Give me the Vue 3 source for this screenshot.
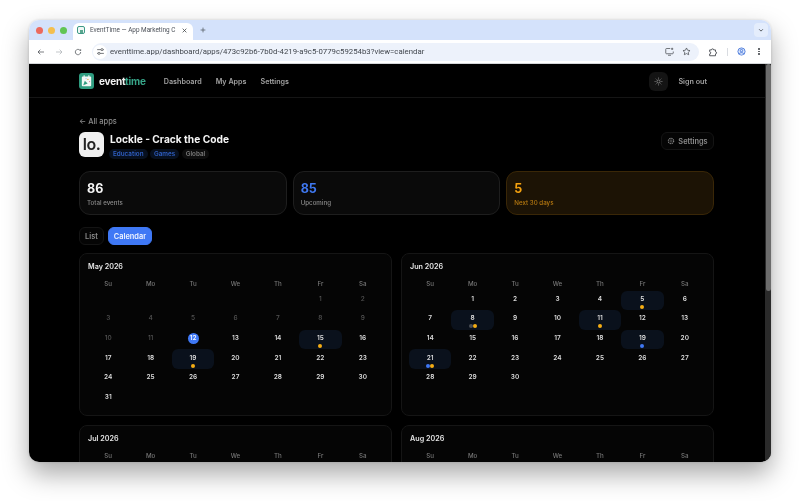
<script setup>
const lead = { May: 5, Jun: 1, Jul: 3, Aug: 6 }

function buildDays(total, offset, dim, marks) {
  const cells = []
  for (let i = 0; i < offset; i++) cells.push({ key: 'e' + i, empty: true })
  for (let d = 1; d <= total; d++) {
    cells.push({ key: d, n: d, dim: d < dim, today: dim > 1 && d === dim, dots: marks[d] || [] })
  }
  return cells
}

const weekdays = ['Su', 'Mo', 'Tu', 'We', 'Th', 'Fr', 'Sa']

const months = [
  { name: 'May 2026', days: buildDays(31, lead.May, 12, { 15: ['amber'], 19: ['amber'] }) },
  {
    name: 'Jun 2026',
    days: buildDays(30, lead.Jun, 1, {
      5: ['amber'],
      8: ['grey', 'amber'],
      11: ['amber'],
      19: ['blue'],
      21: ['blue', 'amber']
    })
  },
  { name: 'Jul 2026', days: [] },
  { name: 'Aug 2026', days: [] }
]
</script>

<template>
  <div class="stage">
    <div class="window">
      <!-- Browser chrome -->
      <div class="tabstrip">
        <div class="lights">
          <span class="light red"></span>
          <span class="light yellow"></span>
          <span class="light green"></span>
        </div>
        <div class="tab">
          <span class="favicon"><i></i></span>
          <span class="tab-title">EventTime — App Marketing C</span>
          <svg class="tab-close" viewBox="0 0 8 8"><path d="M1 1l6 6M7 1l-6 6" /></svg>
        </div>
        <svg class="new-tab" viewBox="0 0 10 10"><path d="M5 1v8M1 5h8" /></svg>
        <span class="tab-menu">
          <svg viewBox="0 0 8 8"><path d="M1.5 3l2.5 2.5L6.5 3" /></svg>
        </span>
      </div>
      <div class="toolbar">
        <svg class="tool" viewBox="0 0 12 12"><path d="M10.5 6h-9M5 2.5L1.5 6 5 9.5" /></svg>
        <svg class="tool faded" viewBox="0 0 12 12"><path d="M1.5 6h9M7 2.5L10.5 6 7 9.5" /></svg>
        <svg class="tool" viewBox="0 0 12 12"><path d="M10 6a4 4 0 1 1-1.2-2.8L10 4.400V1.800" /></svg>
        <div class="omnibox">
          <span class="site-info">
            <svg viewBox="0 0 12 12"><path d="M1.500 3.500h5M9.500 3.500h1M1.500 8.500h1M5.500 8.500h5" /><circle cx="8" cy="3.500" r="1.400" /><circle cx="4" cy="8.500" r="1.400" /></svg>
          </span>
          <span class="url">eventtime.app/dashboard/apps/473c92b6-7b0d-4219-a9c5-0779c59254b3?view=calendar</span>
          <svg class="omni-icon" viewBox="0 0 12 12"><path d="M7 2H2a1 1 0 0 0-1 1v5a1 1 0 0 0 1 1h8a1 1 0 0 0 1-1V6M4 11h4M9.500 1v3M8 2.500h3" /></svg>
          <svg class="omni-icon" viewBox="0 0 12 12"><path d="M6 1.300l1.450 3 3.250.45-2.350 2.300.55 3.250L6 8.750 3.100 10.300l.55-3.250L1.300 4.750l3.250-.45z" /></svg>
        </div>
        <svg class="tool ext" viewBox="0 0 12 12"><path d="M2 3.500h2.200a1.300 1.300 0 0 1 2.600 0H9v2.200a1.300 1.300 0 0 1 0 2.600V10.500H2V8.300a1.300 1.300 0 0 0 0-2.600z" /></svg>
        <span class="tool-sep"></span>
        <svg class="tool profile" viewBox="0 0 12 12"><circle cx="6" cy="6" r="4.800" /><circle cx="6" cy="4.800" r="1.600" /><path d="M2.900 9.500c.7-1.500 1.800-2 3.100-2s2.400.5 3.100 2" /></svg>
        <span class="kebab"><i></i><i></i><i></i></span>
      </div>

      <div class="viewport">
        <div class="page">
          <header class="nav">
            <div class="nav-left">
              <span class="logo">
                <svg viewBox="0 0 16 16">
                  <rect x="3" y="3.200" width="10" height="10.300" rx="1" fill="#f2f7f5" />
                  <path d="M5.500 1.800v2.400M10.500 1.800v2.400" stroke="#f2f7f5" stroke-width="1.200" fill="none" />
                  <path d="M4.500 12.500l1.700-4.800 3 3z" fill="#2f9c80" />
                  <circle cx="9.500" cy="6.300" r=".7" fill="#e0a33a" />
                  <circle cx="11.300" cy="8.600" r=".6" fill="#d86a8a" />
                  <circle cx="7.500" cy="5.600" r=".5" fill="#4a86e8" />
                </svg>
              </span>
              <span class="wordmark">event<em>time</em></span>
              <nav class="nav-links">
                <a>Dashboard</a>
                <a>My Apps</a>
                <a>Settings</a>
              </nav>
            </div>
            <div class="nav-right">
              <span class="theme-btn">
                <svg viewBox="0 0 12 12"><circle cx="6" cy="6" r="2.100" /><path d="M6 .8v1.400M6 9.800v1.400M.8 6h1.400M9.800 6h1.400M2.300 2.300l1 1M8.700 8.700l1 1M2.300 9.700l1-1M8.700 3.300l1-1" /></svg>
              </span>
              <a class="sign-out">Sign out</a>
            </div>
          </header>

          <main class="content">
            <a class="back">← All apps</a>

            <div class="app-head">
              <div class="app-id">
                <span class="app-icon">lo.</span>
                <div>
                  <h1>Lockle - Crack the Code</h1>
                  <div class="tags">
                    <span class="tag blue">Education</span>
                    <span class="tag blue">Games</span>
                    <span class="tag plain">Global</span>
                  </div>
                </div>
              </div>
              <button class="settings-btn">
                <svg viewBox="0 0 12 12"><circle cx="6" cy="6" r="1.600" /><circle cx="6" cy="6" r="4" stroke-dasharray="2 1.140" stroke-width="1.800" /></svg>
                Settings
              </button>
            </div>

            <section class="stats">
              <div class="stat">
                <strong>86</strong>
                <span>Total events</span>
              </div>
              <div class="stat stat-blue">
                <strong>85</strong>
                <span>Upcoming</span>
              </div>
              <div class="stat stat-amber">
                <strong>5</strong>
                <span>Next 30 days</span>
              </div>
            </section>

            <div class="view-tabs">
              <button class="view-tab">List</button>
              <button class="view-tab active">Calendar</button>
            </div>

            <section class="calendars">
              <article v-for="month in months" :key="month.name" class="month">
                <h2>{{ month.name }}</h2>
                <div class="weekdays">
                  <span v-for="w in weekdays" :key="w">{{ w }}</span>
                </div>
                <div class="days">
                  <div
                    v-for="cell in month.days"
                    :key="cell.key"
                    class="day"
                    :class="{ dim: cell.dim, marked: cell.dots && cell.dots.length }"
                  >
                    <template v-if="!cell.empty">
                      <span class="num" :class="{ today: cell.today }">{{ cell.n }}</span>
                      <span v-if="cell.dots.length" class="dots">
                        <i v-for="(d, i) in cell.dots" :key="i" :class="d"></i>
                      </span>
                    </template>
                  </div>
                </div>
              </article>
            </section>
          </main>
        </div>
        <div class="scrollbar"><span></span></div>
      </div>
    </div>
  </div>
</template>

<style>
html, body {
  margin: 0;
  background: #fff;
}
</style>

<style scoped>
.stage {
  width: 800px;
  height: 501px;
  box-sizing: border-box;
  padding: 20px 29px 39px;
  background: #fff;
  overflow: hidden;
  font-family: Inter, "Liberation Sans", sans-serif;
}
.window {
  height: 442px;
  border-radius: 10px;
  overflow: hidden;
  display: flex;
  flex-direction: column;
  box-shadow: 0 12px 26px rgba(0, 0, 0, 0.34), 0 0 3px rgba(0, 0, 0, 0.15);
  filter: blur(0.3px);
}

/* Browser chrome */
.tabstrip {
  flex: none;
  height: 20px;
  background: #d4e2fb;
  display: flex;
  align-items: flex-end;
  position: relative;
}
.lights {
  display: flex;
  gap: 5px;
  padding: 0 0 6.500px 6.500px;
  margin-right: 6.500px;
}
.light {
  width: 7px;
  height: 7px;
  border-radius: 50%;
}
.red { background: #ec6a5e; }
.yellow { background: #f4bf4f; }
.green { background: #61c554; }
.tab {
  width: 120px;
  height: 17px;
  background: #fff;
  border-radius: 6px 6px 0 0;
  display: flex;
  align-items: center;
  box-sizing: border-box;
  padding: 0 6px 3px 4px;
  gap: 5px;
}
.favicon {
  flex: none;
  width: 8px;
  height: 8px;
  box-sizing: border-box;
  border: 1.500px solid #3d9a86;
  border-radius: 2px;
  background: #f0f7f5;
  display: flex;
  align-items: flex-end;
  justify-content: center;
}
.favicon i {
  width: 3px;
  height: 3px;
  background: #5aa78f;
}
.tab-title {
  flex: 1;
  min-width: 0;
  overflow: hidden;
  white-space: nowrap;
  font-size: 6.400px;
  color: #4a4f57;
  font-family: Roboto, "Liberation Sans", sans-serif;
}
.tab-close {
  flex: none;
  width: 5px;
  height: 5px;
  fill: none;
  stroke: #3c4043;
  stroke-width: 1.200;
}
.new-tab {
  width: 6px;
  height: 6px;
  margin: 0 0 7px 7px;
  fill: none;
  stroke: #50565e;
  stroke-width: 1.200;
}
.tab-menu {
  margin: 0 3px 3px auto;
  width: 14px;
  height: 14px;
  border-radius: 4px;
  background: #e4edfc;
  display: flex;
  align-items: center;
  justify-content: center;
}
.tab-menu svg {
  width: 6px;
  height: 6px;
  fill: none;
  stroke: #3c4043;
  stroke-width: 1.100;
}
.toolbar {
  flex: none;
  height: 24px;
  box-sizing: border-box;
  background: #fff;
  border-bottom: 1px solid #d5d7da;
  display: flex;
  align-items: center;
  padding-left: 8px;
}
.tool {
  flex: none;
  width: 8px;
  height: 8px;
  margin-right: 10px;
  fill: none;
  stroke: #4a4e53;
  stroke-width: 1.100;
}
.tool.faded {
  stroke: #aeb2b7;
  margin-right: 11px;
}
.omnibox {
  flex: none;
  width: 607px;
  height: 18px;
  border-radius: 9px;
  background: #edf2fb;
  display: flex;
  align-items: center;
  box-sizing: border-box;
}
.site-info {
  flex: none;
  width: 14px;
  height: 14px;
  margin: 0 3px 0 1px;
  border-radius: 50%;
  background: #fff;
  display: flex;
  align-items: center;
  justify-content: center;
}
.site-info svg {
  width: 9px;
  height: 9px;
  fill: none;
  stroke: #4a4e53;
  stroke-width: 1;
}
.url {
  flex: 1;
  font-size: 7.800px;
  color: #41464d;
  white-space: nowrap;
  font-family: Roboto, "Liberation Sans", sans-serif;
}
.omni-icon {
  flex: none;
  width: 9px;
  height: 9px;
  margin-right: 8px;
  fill: none;
  stroke: #4a4e53;
  stroke-width: 1;
}
.tool.ext {
  width: 10px;
  height: 10px;
  margin: 0 0 0 9px;
}
.tool-sep {
  flex: none;
  width: 1px;
  height: 8px;
  background: #d9dce1;
  margin: 0 8.500px 0 9px;
}
.tool.profile {
  width: 9px;
  height: 9px;
  margin-right: 0;
  stroke: #3b6fd8;
  fill: #dbe6fb;
}
.kebab {
  margin-left: 12.750px;
  display: flex;
  flex-direction: column;
  gap: 1px;
}
.kebab i {
  width: 1.500px;
  height: 1.500px;
  border-radius: 50%;
  background: #4a4e53;
}

/* App page */
.viewport {
  flex: 1;
  min-height: 0;
  display: flex;
  background: #000;
}
.page {
  flex: 1;
  min-width: 0;
  overflow: hidden;
  color: #fafafa;
}
.scrollbar {
  flex: none;
  width: 6px;
  background: #2a2a2a;
}
.scrollbar span {
  display: block;
  width: 5px;
  height: 227px;
  margin-left: 1px;
  border-radius: 3px;
  background: #6c6c6c;
}
.nav {
  height: 34px;
  box-sizing: border-box;
  border-bottom: 1px solid #151515;
  padding: 1px 58px 0 50px;
  display: flex;
  align-items: center;
  justify-content: space-between;
}
.nav-left, .nav-right {
  display: flex;
  align-items: center;
}
.logo {
  width: 15px;
  height: 16px;
  border-radius: 3px;
  background: #2f9c80;
  display: flex;
  margin-right: 5px;
}
.logo svg {
  width: 100%;
  height: 100%;
}
.wordmark {
  font-size: 10px;
  font-weight: 700;
  letter-spacing: -0.2px;
  color: #f2f2f2;
}
.wordmark em {
  font-style: normal;
  color: #37a488;
}
.nav-links {
  display: flex;
  gap: 14px;
  margin-left: 18px;
}
.nav-links a {
  font-size: 7.200px;
  font-weight: 600;
  color: #a1a1a1;
}
.theme-btn {
  width: 19px;
  height: 19px;
  border-radius: 6px;
  background: #141414;
  display: flex;
  align-items: center;
  justify-content: center;
}
.theme-btn svg {
  width: 9px;
  height: 9px;
  fill: none;
  stroke: #a8a8a8;
  stroke-width: 0.9;
}
.sign-out {
  margin-left: 10px;
  font-size: 7.200px;
  font-weight: 600;
  color: #a1a1a1;
}
.content {
  padding: 19px 51px 0 50px;
}
.back {
  display: block;
  font-size: 7.500px;
  line-height: 10px;
  font-weight: 500;
  color: #8a8a8a;
}
.app-head {
  margin-top: 5px;
  display: flex;
  justify-content: space-between;
  align-items: flex-start;
}
.app-id {
  display: flex;
  gap: 6px;
}
.app-icon {
  width: 25px;
  height: 25px;
  border-radius: 6px;
  background: #f0f0f0;
  color: #222;
  font-size: 16px;
  font-weight: 600;
  letter-spacing: -0.5px;
  line-height: 25px;
  text-align: center;
}
h1 {
  margin: 0;
  font-size: 10.200px;
  line-height: 15px;
  font-weight: 700;
  color: #f5f5f5;
}
.tags {
  display: flex;
  gap: 2.500px;
  margin: 1.500px 0 0 -1px;
}
.tag {
  height: 10px;
  line-height: 10px;
  padding: 0 4px;
  border-radius: 5px;
  font-size: 6.300px;
  font-weight: 600;
}
.tag.blue {
  background: #07101f;
  color: #2f5fc4;
}
.tag.plain {
  background: #0d0d0d;
  color: #7b7b7b;
}
.settings-btn {
  height: 18px;
  width: 53px;
  padding: 0;
  border: 1px solid #141414;
  border-radius: 6px;
  background: #050505;
  color: #8c8c8c;
  font: 600 7.400px Inter, "Liberation Sans", sans-serif;
  display: flex;
  align-items: center;
  justify-content: center;
  gap: 3px;
}
.settings-btn svg {
  width: 8px;
  height: 8px;
  fill: none;
  stroke: #7f7f7f;
  stroke-width: 0.8;
}
.stats {
  margin-top: 12.500px;
  display: grid;
  grid-template-columns: 1fr 1fr 1fr;
  gap: 6px;
}
.stat {
  height: 44px;
  box-sizing: border-box;
  padding: 8.500px 7px 0;
  border: 1px solid #1e1e1e;
  border-radius: 11px;
  background: #0a0a0a;
  display: flex;
  flex-direction: column;
}
.stat strong {
  font-size: 12.500px;
  line-height: 15px;
  font-weight: 700;
  color: #f5f5f5;
}
.stat span {
  margin-top: 2px;
  font-size: 6.200px;
  line-height: 9px;
  font-weight: 500;
  color: #8a8a8a;
}
.stat-blue strong { color: #3f78f0; }
.stat-amber {
  background: #1c1305;
  border-color: #3a2707;
}
.stat-amber strong { color: #f5a20f; }
.stat-amber span { color: #b87a10; }
.view-tabs {
  margin-top: 12px;
  display: flex;
  gap: 4px;
}
.view-tab {
  height: 18px;
  width: 25px;
  padding: 0;
  border: 1px solid #141414;
  border-radius: 6px;
  background: #050505;
  color: #8c8c8c;
  font: 600 7.400px Inter, "Liberation Sans", sans-serif;
}
.view-tab.active {
  width: 44px;
  border-color: #3f78f5;
  background: #3f78f5;
  color: #eef3ff;
}
.calendars {
  margin-top: 8px;
  display: grid;
  grid-template-columns: 1fr 1fr;
  gap: 9px;
}
.month {
  height: 163px;
  box-sizing: border-box;
  border: 1px solid #151515;
  border-radius: 8px;
  background: #050505;
  padding: 8px 7px 0;
}
h2 {
  margin: 0 0 0 1px;
  font-size: 7.200px;
  line-height: 10px;
  font-weight: 600;
  color: #e4e4e4;
}
.weekdays {
  margin-top: 7px;
  display: grid;
  grid-template-columns: repeat(7, 1fr);
  text-align: center;
  font-size: 6.200px;
  line-height: 10px;
  font-weight: 500;
  color: #777;
}
.days {
  margin-top: 1.600px;
  display: grid;
  grid-template-columns: repeat(7, 1fr);
  grid-auto-rows: 19.600px;
}
.day {
  border-radius: 6px;
  display: flex;
  flex-direction: column;
  align-items: center;
  padding-top: 3.200px;
  box-sizing: border-box;
  font-size: 6.500px;
  font-weight: 600;
  color: #dcdcdc;
}
.day.marked {
  background: #0a111c;
}
.day.dim {
  color: #555;
  font-weight: 500;
}
.num {
  width: 11px;
  height: 11px;
  line-height: 11px;
  text-align: center;
  border-radius: 50%;
  flex: none;
}
.num.today {
  background: #3f78f5;
  color: #f4f7ff;
}
.dots {
  display: flex;
}
.dots i {
  flex: none;
  width: 4px;
  height: 4px;
  border-radius: 50%;
}
.dots .amber { background: #f5ad14; }
.dots .blue { background: #3f78f5; }
.dots .grey { background: #4a4e55; }
</style>
